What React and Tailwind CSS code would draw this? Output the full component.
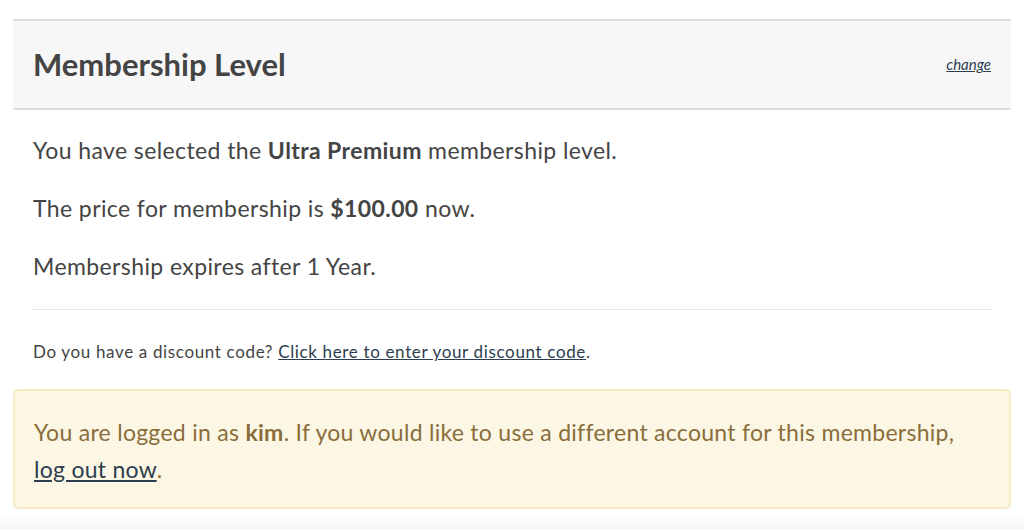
import React from "react";

export default function App() {
  return (
    <div
      className="w-[1024px] h-[529px] bg-white flex flex-col overflow-hidden text-[#444]"
      style={{ fontFamily: "Lato, 'Liberation Sans', sans-serif" }}
    >
      <div className="px-[13px] flex-1">
        {/* header band */}
        <div className="mt-[19px] h-[91px] bg-[#f7f7f7] border-t-2 border-b-2 border-[#dddddd] flex items-center justify-between px-[20px]">
          <h2 className="text-[31px] font-bold text-[#444]">Membership Level</h2>
          <a href="#" className="text-[15px] italic underline text-[#2c3e50]">
            change
          </a>
        </div>

        {/* level details */}
        <div className="px-[20px] pt-[25px] text-[23px] leading-[30px] tracking-[0.4px]">
          <p className="mb-[28px]">
            You have selected the <strong className="font-bold">Ultra Premium</strong> membership level.
          </p>
          <p className="mb-[28px]">
            The price for membership is <strong className="font-bold">$100.00</strong> now.
          </p>
          <p>Membership expires after 1 Year.</p>
          <div className="mt-[28px] border-t border-dotted border-[#cccccc]"></div>
          <p className="mt-[30px] text-[17px] leading-[24px] tracking-[0.65px]">
            Do you have a discount code?{" "}
            <a href="#" className="underline text-[#2c3e50]">
              Click here to enter your discount code
            </a>
            .
          </p>
        </div>

        {/* logged in alert */}
        <div className="mt-[25px] bg-[#fcf7e4] border-2 border-[#f7ebc7] rounded-[5px] px-[19px] pt-[23px] pb-[19px] text-[23px] leading-[37px] tracking-[0.28px] text-[#8a6d3b]">
          You are logged in as <strong className="font-bold">kim</strong>. If you would like to use a
          different account for this membership,
          <br />
          <a href="#" className="underline text-[#2c3e50]">
            log out now
          </a>
          .
        </div>
      </div>
      <div className="h-[14px] bg-gradient-to-b from-white to-[#f5f5f5]"></div>
    </div>
  );
}
